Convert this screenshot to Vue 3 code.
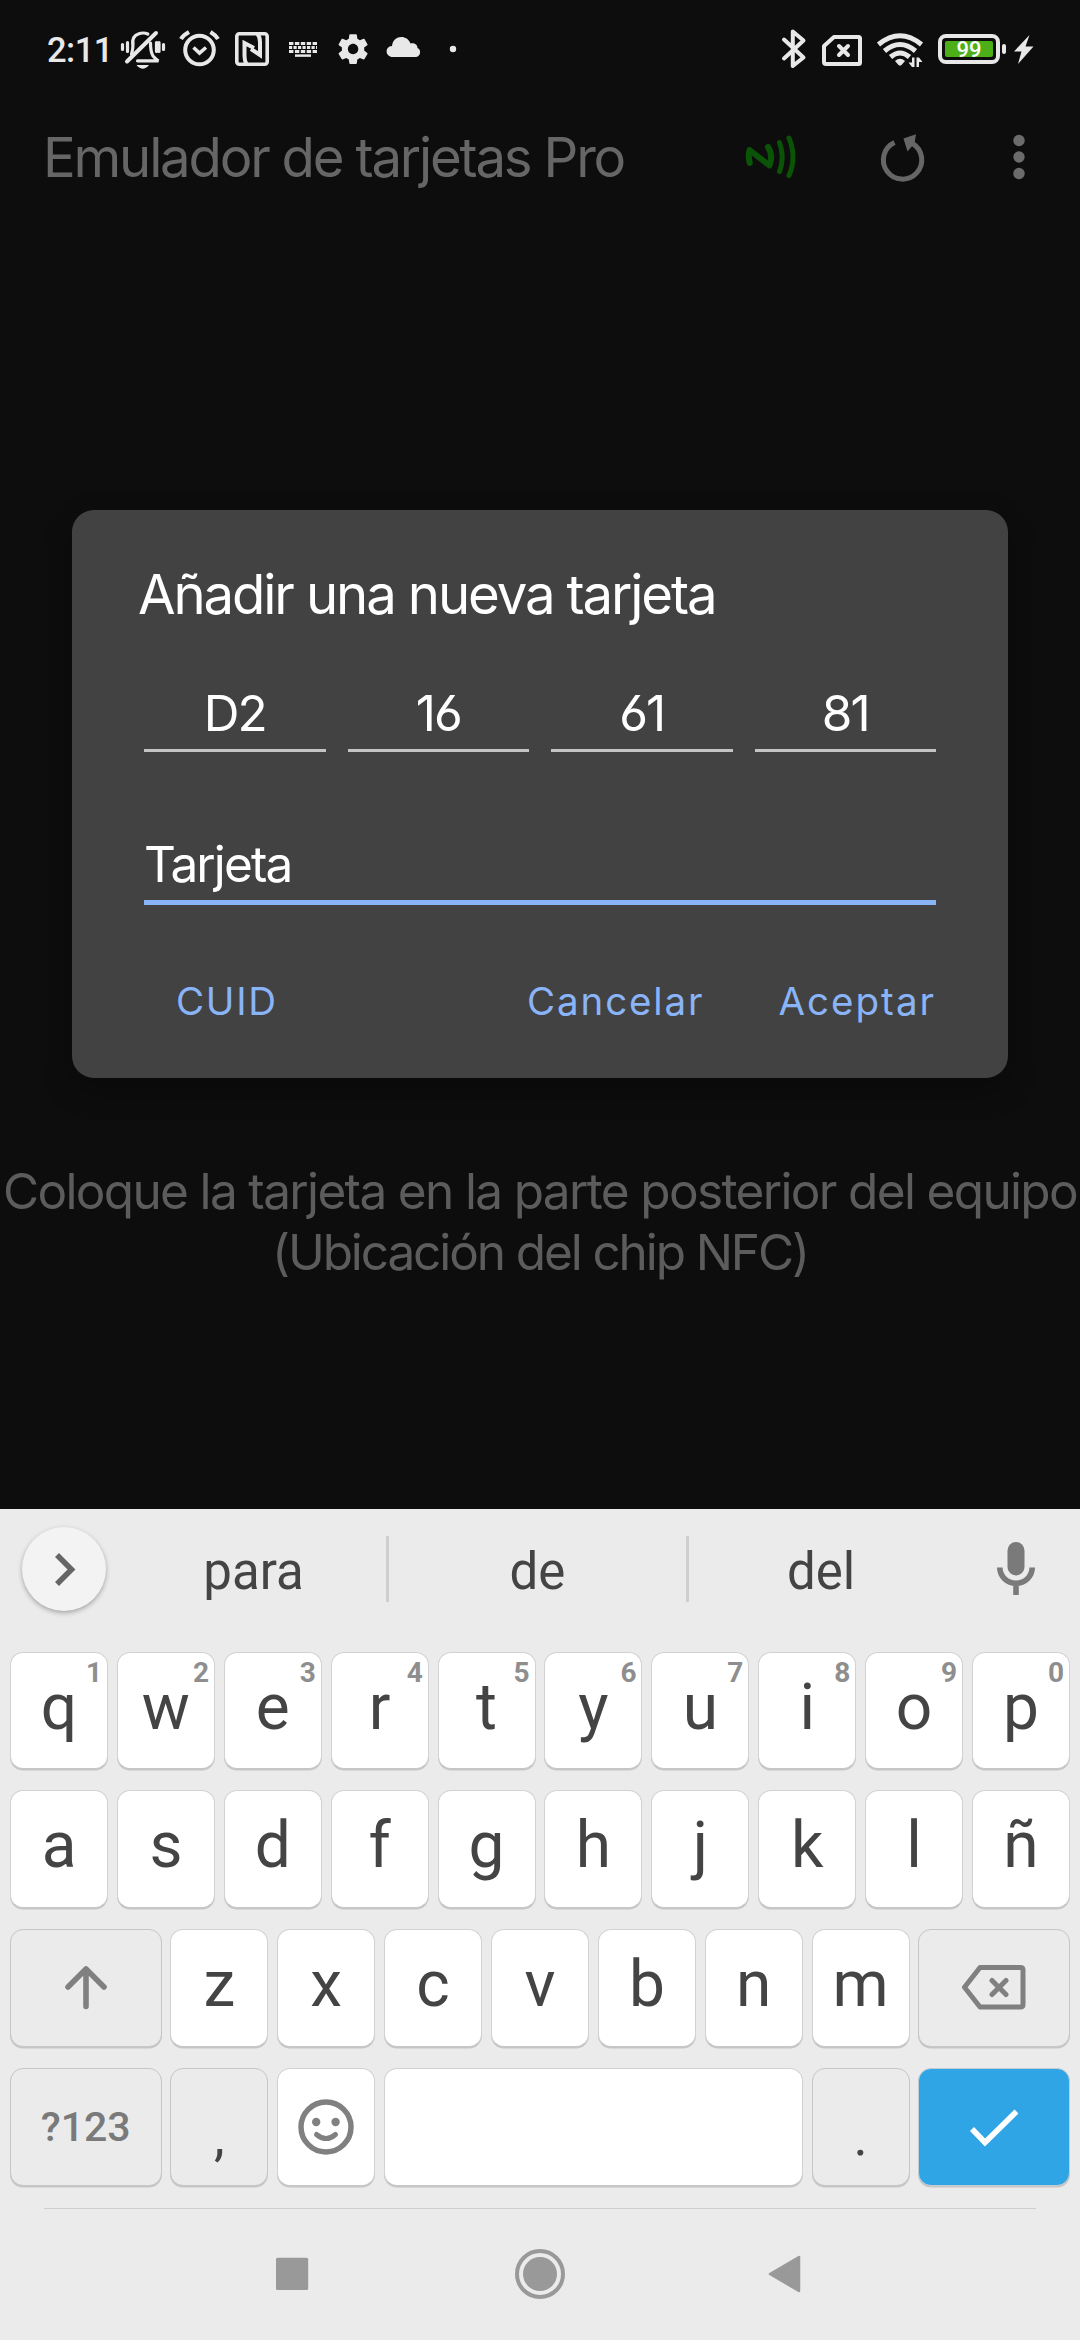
<script setup>
const bytes = ['D2', '16', '61', '81']
const topRow = [...'qwertyuiop'].map((letter, i) => ({ letter, hint: (i + 1) % 10 }))
const homeRow = [...'asdfghjklñ']
const bottomRow = [...'zxcvbnm']
</script>

<template>
  <main class="screen">
    <section class="app">
      <header class="status">
        <span class="clock">2:11</span>
        <svg class="glyph" width="56" height="60" viewBox="116 20 56 60">
          <g fill="none" stroke="#e8e8e8" stroke-width="3.2" stroke-linecap="round">
            <path d="M122.500 44.500v5M127.500 42.500v9M132.800 45q-1-9 5.500-11q5-2 9.500 0M150.500 43q0 9 2.500 13q3 3.500 5.500 4.800h-21M133 42q0 8-1.500 12M156.500 42.500v9M159 42.500v9M163.500 44.500v5" />
            <path d="M127 61.500L156 33" stroke-width="4" />
          </g>
          <path d="M136.500 65h12.500q-6.200 7.500-12.500 0z" fill="#e8e8e8" />
        </svg>
        <svg class="glyph" width="56" height="60" viewBox="172 20 56 60">
          <g fill="none" stroke="#e8e8e8" stroke-width="4">
            <circle cx="199.500" cy="50" r="14.300" />
            <path d="M193.500 47.500l6 5.500l6.500-5.500" stroke-width="3.600" />
            <path d="M181 39q2.500-4 8-7M210.500 32q5 3 7.500 7" stroke-width="4.200" />
          </g>
        </svg>
        <svg class="glyph" width="50" height="60" viewBox="228 20 50 60">
          <g fill="none" stroke="#e8e8e8" stroke-width="3.600">
            <rect x="236.800" y="33.800" width="30.400" height="30.400" rx="2.500" />
            <path d="M246.500 64q-2-3-2-8V43l9.500 5M257.500 34q2.500 3 2.500 8V55l-9-6" stroke-width="4" />
          </g>
        </svg>
        <svg class="glyph" width="48" height="60" viewBox="278 20 48 60">
          <g fill="none" stroke="#e8e8e8" stroke-width="3">
            <path d="M289 43.500h28" stroke-dasharray="4.400 1.500" />
            <path d="M289 47.500h28" stroke-dasharray="3.200 1.300" />
            <path d="M289 51.600h28" stroke-dasharray="4.400 1.500" />
            <path d="M295 55.600h16" stroke-width="2.500" />
          </g>
        </svg>
        <svg class="glyph" width="54" height="60" viewBox="326 20 54 60">
          <path transform="translate(335.200 31.200) scale(1.490)" fill="#e8e8e8" d="M19.430 12.980c.040-.320.070-.640.070-.980s-.030-.660-.070-.980l2.110-1.650c.190-.150.240-.420.120-.640l-2-3.460c-.120-.220-.390-.300-.610-.220l-2.490 1c-.520-.400-1.080-.730-1.690-.980l-.380-2.650C14.460 2.180 14.250 2 14 2h-4c-.250 0-.460.180-.490.420l-.380 2.650c-.610.250-1.170.590-1.690.980l-2.490-1c-.230-.090-.490 0-.610.220l-2 3.460c-.130.220-.070.490.120.640l2.110 1.650c-.040.320-.070.650-.070.980s.030.660.070.980l-2.110 1.650c-.190.150-.240.420-.120.640l2 3.460c.120.220.390.300.610.220l2.490-1c.520.400 1.080.730 1.690.980l.380 2.650c.030.240.240.420.490.420h4c.250 0 .460-.180.490-.420l.380-2.650c.610-.250 1.170-.590 1.690-.980l2.490 1c.230.090.490 0 .610-.220l2-3.460c.120-.220.070-.490-.120-.640l-2.110-1.650zM12 15.500c-1.930 0-3.500-1.570-3.500-3.500s1.570-3.500 3.500-3.500 3.500 1.570 3.500 3.500-1.570 3.500-3.500 3.500z" />
        </svg>
        <svg class="glyph" width="50" height="60" viewBox="380 20 50 60">
          <path fill="#e8e8e8" d="M393 57c-8 0-8.500-10.500-1-11c1-11 15-12 18.500-2.500c5-1 7 2 7 4.500c4 1.500 3.500 9-2 9z" />
        </svg>
        <svg class="glyph" width="46" height="60" viewBox="430 20 46 60">
          <circle cx="453" cy="49" r="3.200" fill="#e8e8e8" />
        </svg>
        <span class="grow"></span>
        <svg class="glyph" width="42" height="60" viewBox="772 20 42 60">
          <path fill="none" stroke="#e8e8e8" stroke-width="4" stroke-linejoin="round" stroke-linecap="round" d="M784 39.500L803.500 57.500L792.800 66V31.500L803.500 40.500L784 58.500" />
        </svg>
        <svg class="glyph" width="56" height="60" viewBox="814 20 56 60">
          <g fill="none" stroke="#e8e8e8" stroke-width="4" stroke-linejoin="round" stroke-linecap="round">
            <path d="M834 37h24.500q1.500 0 1.500 1.500V62.500q0 1.500-1.500 1.500H826q-2 0-2-2V46z" />
            <path d="M839 46l9 9M848 46l-9 9" />
          </g>
        </svg>
        <svg class="glyph" width="60" height="60" viewBox="870 20 60 60">
          <g fill="none" stroke="#e8e8e8" stroke-width="5">
            <path d="M878.500 44.500q21.500-17.500 43 0" />
            <path d="M884.500 51q15.500-13 31 0" />
            <path d="M890.500 57q9.500-8 19 0" />
          </g>
          <path fill="#e8e8e8" d="M895 61q5-4.500 10 0l-3.500 4q-1.500 1.200-3 0z" />
          <path fill="#e8e8e8" d="M912 57.500h2.500v9.500h-2.500l-3.500-4.500h3.500zM916.500 67V57.500h2.500l3.500 4.500h-3.500v5z" />
        </svg>
        <svg class="glyph" width="80" height="60" viewBox="930 20 80 60">
          <rect x="940" y="36" width="58" height="26" rx="6" fill="none" stroke="#e8e8e8" stroke-width="4" />
          <rect x="945" y="41" width="48" height="16" rx="2" fill="#4caf17" />
          <rect x="1002" y="44" width="4" height="10" rx="2" fill="#e8e8e8" />
          <text x="969" y="57.300" text-anchor="middle" class="charge">99</text>
        </svg>
        <svg class="glyph" width="34" height="60" viewBox="1010 20 34 60">
          <path fill="#e8e8e8" d="M1029.500 35L1014 51.500h7.500L1018 64l15.500-17.500h-8z" />
        </svg>
      </header>

      <div class="toolbar">
        <h1 class="app-title">Emulador de tarjetas Pro</h1>
        <svg width="60" height="60" viewBox="740 126 60 60">
          <g fill="none" stroke="#0b5307" stroke-width="5" stroke-linecap="round" stroke-linejoin="round">
            <path d="M749.800 163q-2-7-.300-13l20 15.500q4-10-1.500-18.500" stroke-width="6" />
            <path d="M779.500 142.500q5.500 15 0 29M789 138q8 19.500 0 37.500" />
          </g>
        </svg>
        <svg width="60" height="60" viewBox="873 126 60 60">
          <path d="M894.500 142.500A19.200 19.200 0 1 0 912.500 143.500" fill="none" stroke="#666" stroke-width="5" />
          <path d="M903.500 138.500L916 134.300L914.500 143.500L907.500 151.500z" fill="#666" />
        </svg>
        <svg width="60" height="60" viewBox="989 126 60 60">
          <g fill="#6b6b6b"><circle cx="1019" cy="140.500" r="5.700" /><circle cx="1019" cy="157" r="5.700" /><circle cx="1019" cy="173.500" r="5.700" /></g>
        </svg>
      </div>

      <section class="dialog">
        <h2 class="dialog-title">Añadir una nueva tarjeta</h2>
        <div class="bytes">
          <span v-for="b in bytes" :key="b" class="byte">{{ b }}</span>
        </div>
        <div class="name">Tarjeta</div>
        <div class="actions">
          <span class="cuid">CUID</span>
          <span class="cancel">Cancelar</span>
          <span class="accept">Aceptar</span>
        </div>
      </section>

      <p class="message">
        <span class="line-one">Coloque la tarjeta en la parte posterior del equipo</span>
        <span class="line-two">(Ubicación del chip NFC)</span>
      </p>
    </section>

    <section class="keyboard">
      <div class="suggest">
        <span class="round">
          <svg width="84" height="84" viewBox="22 1527 84 84"><path d="M57 1555l14.500 14.500l-14.500 14.500" fill="none" stroke="#666" stroke-width="5.600" /></svg>
        </span>
        <span class="word first">para</span>
        <span class="bar"></span>
        <span class="word">de</span>
        <span class="bar"></span>
        <span class="word last">del</span>
        <svg class="mic" width="44" height="60" viewBox="994 1539 44 60">
          <rect x="1007.500" y="1542" width="17" height="33.500" rx="8.500" fill="#7a7a7a" />
          <path d="M999.800 1567.500a16.200 15.800 0 0 0 32.400 0M1016 1584v11" fill="none" stroke="#7a7a7a" stroke-width="5.600" />
        </svg>
      </div>

      <div class="keys">
        <span v-for="k in topRow" :key="k.letter" class="key">{{ k.letter }}<small class="hint">{{ k.hint }}</small></span>
        <span v-for="k in homeRow" :key="k" class="key">{{ k }}</span>

        <span class="key wide soft">
          <svg width="60" height="60" viewBox="55.500 1958 60 60"><path d="M85.500 2006.500V1969M67.500 1987l18-18l18 18" fill="none" stroke="#808080" stroke-width="5.600" stroke-linecap="round" stroke-linejoin="round" /></svg>
        </span>
        <span v-for="k in bottomRow" :key="k" class="key">{{ k }}</span>
        <span class="key wide soft">
          <svg width="76" height="60" viewBox="955.500 1958 76 60"><path d="M979.500 1967.500h40.500q2.500 0 2.500 2.500v34.500q0 2.500-2.500 2.500h-40.500l-15.500-19.700zM991.500 1980.500l14 14M1005.500 1980.500l-14 14" fill="none" stroke="#808080" stroke-width="5" stroke-linecap="round" stroke-linejoin="round" /></svg>
        </span>

        <span class="key wide soft symbols">?123</span>
        <span class="key soft punct">,</span>
        <span class="key">
          <svg width="64" height="64" viewBox="293 2095 64 64">
            <circle cx="325" cy="2127" r="25" fill="none" stroke="#808080" stroke-width="5.500" />
            <circle cx="315.200" cy="2122" r="4.200" fill="#808080" /><circle cx="334.600" cy="2122" r="4.200" fill="#808080" />
            <path d="M315.500 2134.500q9.500 8 19 0" fill="none" stroke="#808080" stroke-width="5" stroke-linecap="round" />
          </svg>
        </span>
        <span class="key space"></span>
        <span class="key soft punct">.</span>
        <span class="key wide enter">
          <svg width="64" height="64" viewBox="961.500 2095 64 64"><path d="M971.500 2129l13 13.500L1016 2111.500" fill="none" stroke="#fff" stroke-width="5.600" /></svg>
        </span>
      </div>

      <nav class="nav">
        <svg width="60" height="60" viewBox="262 2245.500 60 60"><rect x="276" y="2259.300" width="32.200" height="32.200" rx="1.500" fill="#999" /></svg>
        <svg class="home" width="60" height="60" viewBox="510 2245.500 60 60"><circle cx="540" cy="2275.500" r="23" fill="none" stroke="#999" stroke-width="4" /><circle cx="540" cy="2275.500" r="17" fill="#999" /></svg>
        <svg width="60" height="60" viewBox="755 2245.500 60 60"><path d="M770 2275.500L799 2258.500V2292.500z" fill="#999" stroke="#999" stroke-width="2.500" stroke-linejoin="round" /></svg>
      </nav>
    </section>
  </main>
</template>

<style>
body { background: #0d0d0d; }
</style>

<style scoped>
.screen { width: 1080px; height: 2340px; display: flex; flex-direction: column; overflow: hidden; font-family: Inter, "Liberation Sans", sans-serif; background: #0d0d0d; }
.app { height: 1509px; display: flex; flex-direction: column; }
svg { display: block; flex: none; }
h1, h2, p { margin: 0; font-weight: 400; }

.status { height: 80px; padding: 20px 36px 0 47px; box-sizing: border-box; display: flex; }
.clock { width: 69px; font: 500 34.500px/60px Roboto, sans-serif; color: #e8e8e8; letter-spacing: -0.500px; white-space: nowrap; }
.grow { flex: 1; }
.charge { font: 500 22px Roboto, sans-serif; fill: #fff; }

.toolbar { margin-top: 20px; height: 112px; padding: 0 31px 0 43px; display: flex; align-items: center; }
.toolbar svg:nth-of-type(2) { margin-left: 73px; }
.toolbar svg:nth-of-type(3) { margin-left: 56px; }
.app-title { flex: 1; padding-top: 2px; font-size: 54.500px; line-height: 112px; color: #666; letter-spacing: -2.200px; white-space: nowrap; }

.dialog { margin: 298px 72px 0; height: 568px; padding: 0 72px; box-sizing: border-box; border-radius: 22px; background: #424242; color: #fff; box-shadow: 0 12px 30px rgba(0, 0, 0, .28); }
.dialog-title { padding-top: 44px; margin-left: -6px; font-size: 54.500px; line-height: 80px; letter-spacing: -2.120px; white-space: nowrap; }
.bytes { margin-top: 38px; display: flex; gap: 22px; }
.byte { flex: 1; height: 80px; box-sizing: border-box; border-bottom: 3px solid #c4c4c4; line-height: 82px; font-size: 49.500px; letter-spacing: -2px; text-align: center; font-feature-settings: "ss01"; }
.name { margin-top: 71px; height: 82px; box-sizing: border-box; border-bottom: 5px solid #8ab4f8; line-height: 82px; font-size: 49.500px; letter-spacing: -1.900px; }
.actions { margin-top: 56px; display: flex; font-size: 38.500px; line-height: 80px; color: #8ab4f8; white-space: nowrap; }
.cuid { margin-left: 32px; flex: 1; letter-spacing: 1.700px; }
.cancel { margin-right: 74px; letter-spacing: 1.900px; }
.accept { letter-spacing: 2px; }

.message { margin-top: 83px; display: flex; flex-direction: column; align-items: center; font-size: 49.500px; line-height: 61px; color: #5c5c5c; white-space: nowrap; }
.line-one { letter-spacing: -1.650px; }
.line-two { letter-spacing: -2.100px; }

.keyboard { height: 831px; background: #ebebeb; font-family: Roboto, sans-serif; color: #444; }
.suggest { height: 143px; padding: 18px 42px 0 22px; box-sizing: border-box; display: flex; align-items: flex-start; }
.round { width: 84px; height: 84px; border-radius: 50%; background: #f3f3f3; box-shadow: 0 2px 5px rgba(0, 0, 0, .3); }
.word { width: 297px; text-align: center; font-size: 51px; line-height: 90px; }
.first { width: 280px; padding-left: 15px; box-sizing: border-box; }
.last { width: 264px; }
.bar { width: 3px; height: 66px; margin-top: 9px; background: #cfcfcf; }
.mic { margin: 12px 0 0 41px; }

.keys { padding: 0 10px; display: grid; grid-template-columns: repeat(20, minmax(0, 1fr)); grid-template-rows: 117px 118px 118px 118px; gap: 21px 8.800px; }
.key { grid-column: span 2; position: relative; box-sizing: border-box; display: flex; align-items: center; justify-content: center; border-radius: 13px; background: #fff; border: 1px solid #d2d2d2; border-bottom-color: #c6c6c6; box-shadow: 0 1.500px 0 #c6c6c6; font-size: 64px; line-height: 1; padding-bottom: 6px; }
.key > svg { margin-bottom: -6px; }
.wide { grid-column: span 3; }
.space { grid-column: span 8; }
.soft { background: #ebebeb; border-color: #c6c6c6; }
.hint { position: absolute; top: 3px; right: 5px; font-size: 28px; line-height: 34px; font-weight: 700; color: #8e8e8e; }
.symbols { font-size: 41px; font-weight: 500; color: #7a7a7a; padding-bottom: 0; }
.punct { font-size: 54px; padding: 20px 0 0; }
.enter { background: #2fa5e6; border-color: #c3cdd2; }

.nav { margin: 22px 44px 0; height: 131px; box-sizing: border-box; border-top: 1px solid #cecece; padding: 0 221px 0 218px; display: flex; justify-content: space-between; align-items: center; }
.home { margin: 0 -1.500px 0 1.500px; }
</style>
